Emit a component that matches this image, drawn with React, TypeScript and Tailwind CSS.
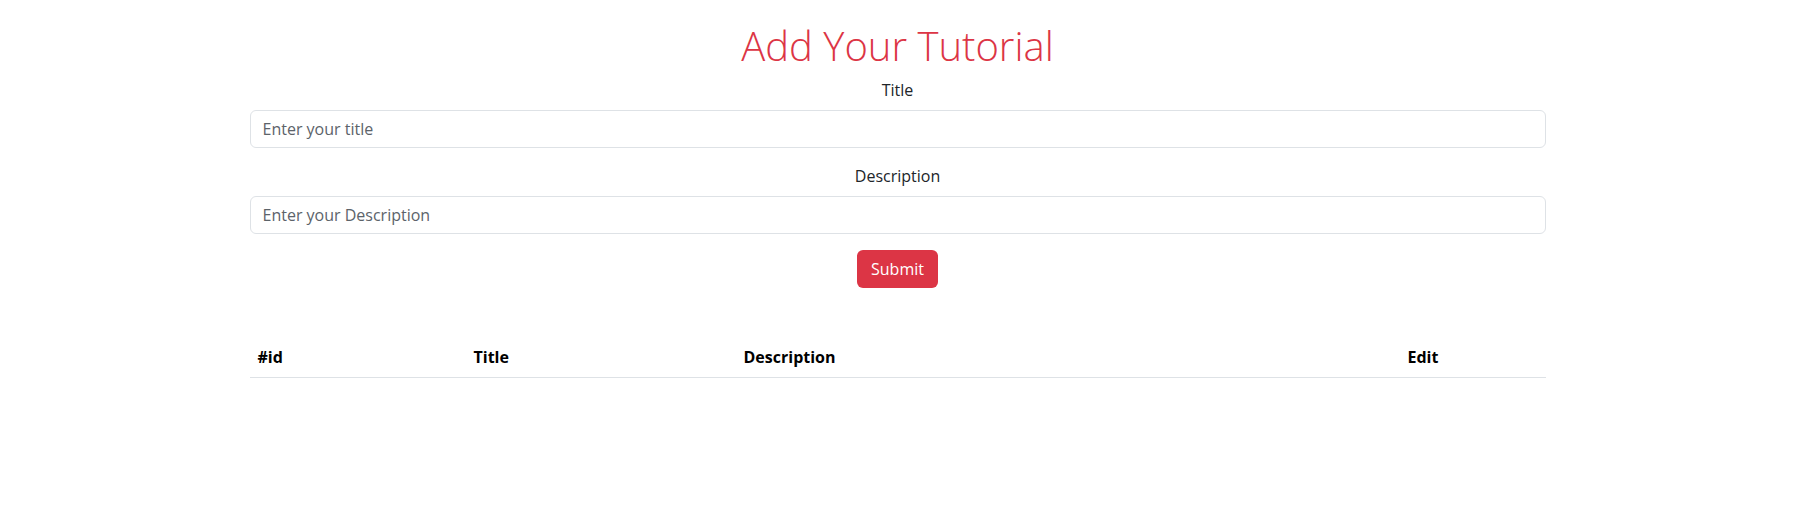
export default function App() {
  const cols = [
    { label: '#id', width: 'w-[216px]' },
    { label: 'Title', width: 'w-[270px]' },
    { label: 'Description', width: 'w-[664px]' },
    { label: 'Edit', width: '' },
  ];

  return (
    <div className="min-h-screen bg-white font-['Open_Sans',sans-serif] text-[#212529]">
      <div className="max-w-[1320px] mx-auto px-3 pt-[22px]">
        {/* Heading */}
        <h1 className="text-center text-[40px] leading-[48px] font-light text-[#dc3545] mb-2">
          Add Your Tutorial
        </h1>

        {/* Form */}
        <form className="flex flex-col" onSubmit={(e) => e.preventDefault()}>
          <div className="mb-4 flex flex-col">
            <label className="text-center text-base leading-6 mb-2">Title</label>
            <input
              type="text"
              placeholder="Enter your title"
              className="h-[38px] w-full rounded-md border border-[#dee2e6] px-3 text-base text-[#212529] placeholder:text-[#5c636a] outline-none"
            />
          </div>
          <div className="mb-4 flex flex-col">
            <label className="text-center text-base leading-6 mb-2">Description</label>
            <input
              type="text"
              placeholder="Enter your Description"
              className="h-[38px] w-full rounded-md border border-[#dee2e6] px-3 text-base text-[#212529] placeholder:text-[#5c636a] outline-none"
            />
          </div>
          <div className="flex justify-center">
            <button
              type="submit"
              className="h-[38px] rounded-md bg-[#dc3545] px-[14px] text-base leading-6 text-white"
            >
              Submit
            </button>
          </div>
        </form>

        {/* Table */}
        <table className="mt-[49px] w-full table-fixed border-collapse">
          <thead>
            <tr className="border-b border-[#dee2e6]">
              {cols.map((c) => (
                <th
                  key={c.label}
                  className={`${c.width} px-2 py-2 text-left text-base leading-6 font-bold text-black`}
                >
                  {c.label}
                </th>
              ))}
            </tr>
          </thead>
          <tbody></tbody>
        </table>
      </div>
    </div>
  );
}
